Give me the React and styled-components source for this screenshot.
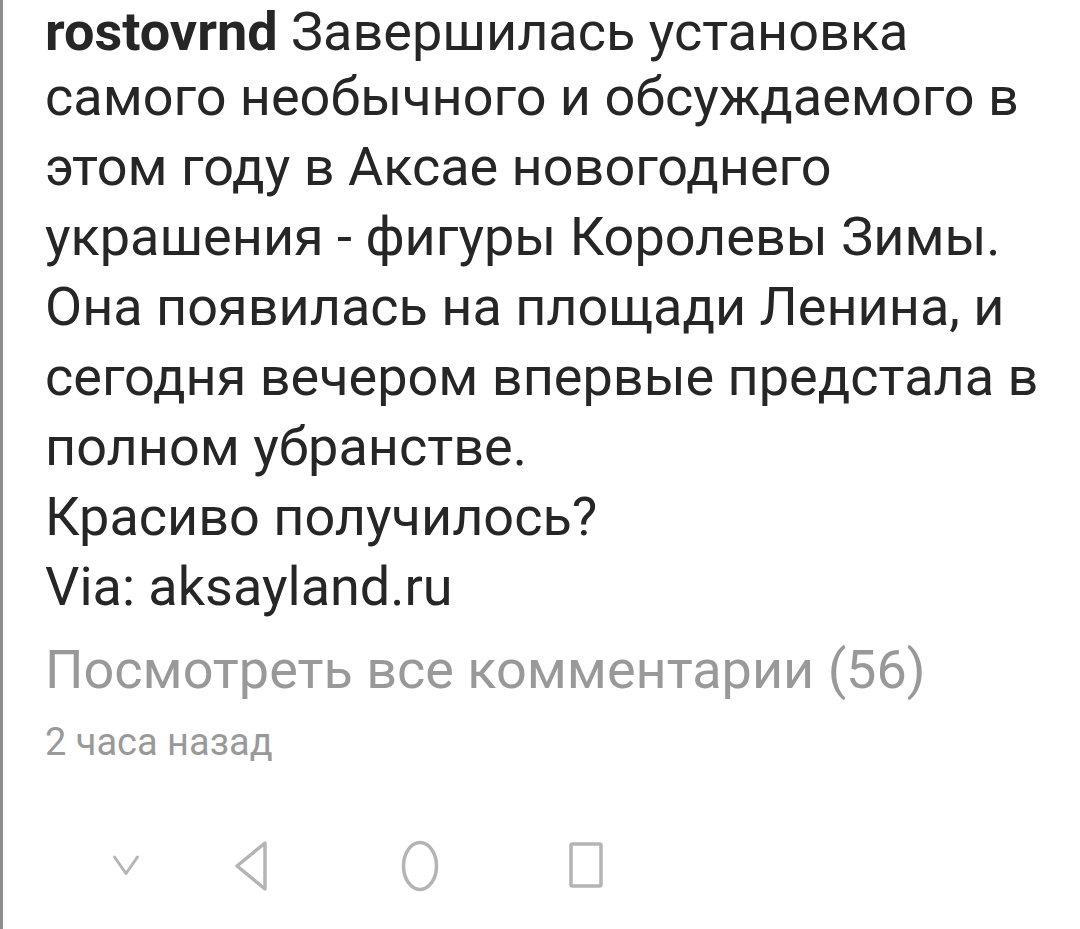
import styled, { createGlobalStyle } from 'styled-components'

const GlobalStyle = createGlobalStyle`
  html, body {
    margin: 0;
    padding: 0;
    background: #ffffff;
  }
`

const Screen = styled.div`
  width: 1080px;
  height: 929px;
  box-sizing: border-box;
  border-left: 3px solid #8c8c8c;
  display: flex;
  flex-direction: column;
  overflow: hidden;
  font-family: Roboto, "Noto Sans", sans-serif;
`

const Post = styled.div`
  padding: 0 0 0 42px;
  flex: 1;
`

const Caption = styled.div`
  font-size: 54px;
  color: #262626;
  white-space: nowrap;
`

// first line sits tight against the top edge (screenshot is cropped there)
const Line = styled.div`
  line-height: ${p => (p.$first ? '64px' : '70px')};
  margin-bottom: ${p => (p.$first ? '-2px' : '0')};
`

const User = styled.b`
  font-weight: 700;
`

const AllComments = styled.p`
  margin: 13px 0 0;
  font-size: 54px;
  line-height: 70px;
  color: #999999;
`

const Time = styled.p`
  margin: 15px 0 0;
  font-size: 38px;
  line-height: 44px;
  color: #999999;
`

const NavBar = styled.nav`
  height: 126px;
  display: flex;
  align-items: center;
  padding-left: 93px;
`

const NavButton = styled.div`
  width: 60px;
  height: 60px;
  margin-left: ${p => p.$gap || 0}px;
  display: flex;
  align-items: center;
  justify-content: center;
  color: #b4b4b4;
`

const lines = [
  'самого необычного и обсуждаемого в',
  'этом году в Аксае новогоднего',
  'украшения - фигуры Королевы Зимы.',
  'Она появилась на площади Ленина, и',
  'сегодня вечером впервые предстала в',
  'полном убранстве.',
  'Красиво получилось?',
  'Via: aksayland.ru',
]

export default function App() {
  return (
    <>
      <GlobalStyle />
      <Screen>
        <Post>
          <Caption>
            <Line $first>
              <User>rostovrnd</User> Завершилась установка
            </Line>
            {lines.map((l, i) => (
              <Line key={i}>{l}</Line>
            ))}
          </Caption>
          <AllComments>Посмотреть все комментарии (56)</AllComments>
          <Time>2 часа назад</Time>
        </Post>
        <NavBar>
          <NavButton>
            {/* keyboard hide */}
            <svg width="30" height="26" viewBox="0 0 30 26" fill="none" stroke="currentColor" strokeWidth="3" strokeLinecap="round" strokeLinejoin="round">
              <path d="M3.5 4 L15 20.5 L26.5 4" />
            </svg>
          </NavButton>
          <NavButton $gap={66}>
            <svg width="36" height="52" viewBox="0 0 36 52" fill="none" stroke="currentColor" strokeWidth="3.5" strokeLinejoin="round">
              <path d="M31 3 L31 49 L3 26 Z" />
            </svg>
          </NavButton>
          <NavButton $gap={108}>
            <svg width="40" height="54" viewBox="0 0 40 54" fill="none" stroke="currentColor" strokeWidth="3.5">
              <ellipse cx="20" cy="27" rx="16.5" ry="23.5" />
            </svg>
          </NavButton>
          <NavButton $gap={106}>
            <svg width="36" height="48" viewBox="0 0 36 48" fill="none" stroke="currentColor" strokeWidth="3.5" strokeLinejoin="round">
              <rect x="3" y="2" width="30" height="42" rx="1.5" />
            </svg>
          </NavButton>
        </NavBar>
      </Screen>
    </>
  )
}
